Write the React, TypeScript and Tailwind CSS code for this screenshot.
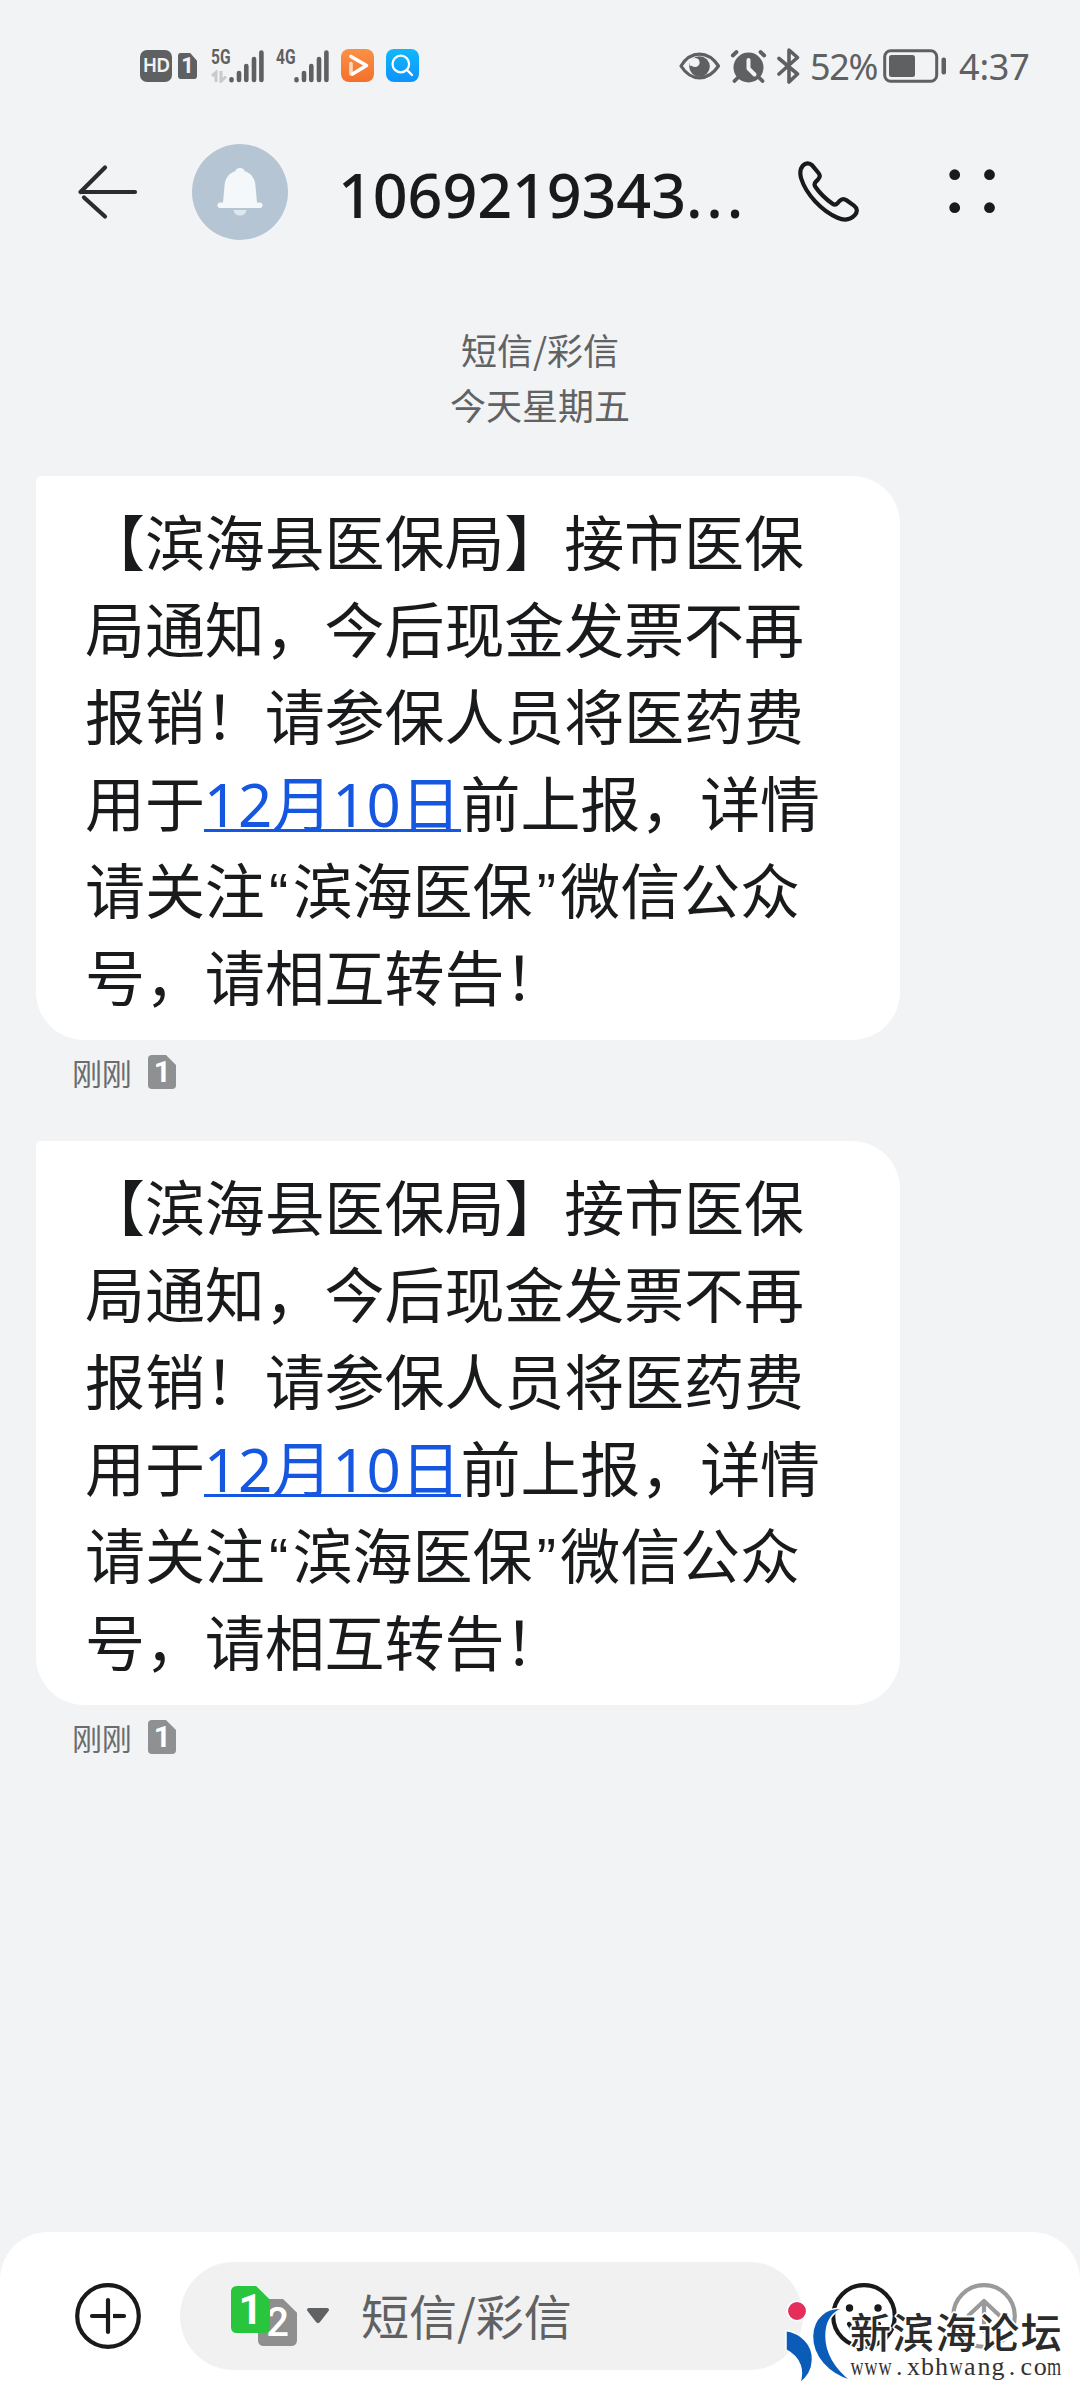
import React from "react";

const CJK = "font-['Noto_Sans_CJK_SC',sans-serif]";
const LATIN = "font-['Noto_Sans','Noto_Sans_CJK_SC',sans-serif]";

function SignalBars() {
  return (
    <svg width="35" height="34" viewBox="0 0 35 34" fill="none" stroke="#5f6061" strokeWidth="4.6" strokeLinecap="round">
      <path d="M2.5 30.2v1M10 24v7M17.3 17v14M25 10v21M32.4 3.5v27.5" />
    </svg>
  );
}

function SimCard({ n, className, textClass }: { n: string; className: string; textClass: string }) {
  return (
    <span className={`relative flex items-center justify-center ${className}`}>
      <svg className="absolute inset-0 h-full w-full" viewBox="0 0 28 34" preserveAspectRatio="none" fill="currentColor">
        <path d="M4 0H18L28 10V30a4 4 0 0 1-4 4H4a4 4 0 0 1-4-4V4a4 4 0 0 1 4-4Z" />
      </svg>
      <span className={`relative font-['Roboto',sans-serif] leading-none ${textClass}`}>{n}</span>
    </span>
  );
}

function StatusBar() {
  return (
    <div className="flex h-[131px] items-center pl-[140px] pr-[51px] text-[#5f6061]">
      <span className={`flex h-8 w-8 shrink-0 items-center justify-center rounded-[7px] bg-[#5f6061] text-[19px] font-semibold leading-none tracking-[-1px] text-[#f1f3f5] ${LATIN}`}>HD</span>
      <SimCard n="1" className="ml-[6px] h-[26px] w-[19px] text-[#5f6061]" textClass="text-[22px] font-bold text-[#f1f3f5]" />
      <div className="ml-[14px] flex h-[34px] items-end">
        <div className="flex h-full w-[18px] flex-col justify-between">
          <span className="block h-[18px] w-[18px] origin-left scale-x-[.74] font-['Roboto',sans-serif] text-[21px] font-bold leading-[17px]">5G</span>
          <svg width="17" height="13" viewBox="0 0 17 13" fill="none" stroke="#c9cacb" strokeWidth="3">
            <path d="M1 6 5 2.5V12M10 1v10l5-4.5" />
          </svg>
        </div>
        <SignalBars />
      </div>
      <div className="ml-[12px] flex h-[34px] items-end">
        <div className="flex h-full w-[18px] flex-col">
          <span className="block h-[18px] w-[18px] origin-left scale-x-[.74] font-['Roboto',sans-serif] text-[21px] font-bold leading-[17px]">4G</span>
        </div>
        <SignalBars />
      </div>
      <svg className="ml-[12px]" width="33" height="33" viewBox="0 0 33 33">
        <defs>
          <linearGradient id="orange" x1="0" y1="0" x2="0" y2="1">
            <stop offset="0" stopColor="#fb9146" />
            <stop offset="1" stopColor="#f4702a" />
          </linearGradient>
        </defs>
        <rect width="33" height="33" rx="8" fill="url(#orange)" />
        <path d="M10 14.500v10.500" stroke="#fff" strokeOpacity=".7" strokeWidth="3.600" strokeLinecap="round" />
        <path d="M10 7.500 25.500 16.500 11.500 25" fill="none" stroke="#fff" strokeWidth="3.600" strokeLinecap="round" strokeLinejoin="round" />
      </svg>
      <svg className="ml-[12px]" width="33" height="33" viewBox="0 0 33 33">
        <defs>
          <linearGradient id="blue" x1="0" y1="0" x2="0" y2="1">
            <stop offset="0" stopColor="#12b7fb" />
            <stop offset="1" stopColor="#0e93fb" />
          </linearGradient>
        </defs>
        <rect width="33" height="33" rx="8" fill="url(#blue)" />
        <circle cx="14.800" cy="15" r="8.300" fill="none" stroke="#fff" strokeWidth="2.200" />
        <path d="m21 21 5 5" stroke="#fff" strokeWidth="2.400" strokeLinecap="round" />
      </svg>

      <div className="ml-auto flex items-center">
        <svg width="42" height="30" viewBox="0 0 42 30">
          <path d="M2 15C7 7 13.500 3.200 20.500 3.200S34 7 39.500 15C34 23 27.500 26.800 20.500 26.800S7 23 2 15Z" fill="none" stroke="#5f6061" strokeWidth="3.200" strokeLinejoin="round" />
          <circle cx="20.500" cy="15.500" r="10.300" fill="#5f6061" />
          <circle cx="16" cy="11.500" r="4.600" fill="#f1f3f5" />
          <path d="M12.500 8a8 8 0 0 0-1.500 7l4-1Z" fill="#f1f3f5" />
        </svg>
        <svg className="ml-[9px]" width="37" height="34" viewBox="0 0 37 34" fill="none" strokeLinecap="round">
          <circle cx="18.500" cy="18.500" r="15" fill="#5f6061" />
          <path d="M2.800 6.500 6.500 3M34.200 6.500 30.500 3M7.500 29l-3 3M29.500 29l3 3" stroke="#5f6061" strokeWidth="3.800" />
          <path d="M18.500 11v8.500l6 6" stroke="#f1f3f5" strokeWidth="4" strokeLinejoin="round" />
        </svg>
        <svg className="ml-[10px]" width="24" height="36" viewBox="0 0 24 36" fill="none" stroke="#5f6061" strokeWidth="3.600" strokeLinecap="round" strokeLinejoin="round">
          <path d="M2 10.500 20.500 26l-8.500 8V2l8.500 7.500L2 26" />
        </svg>
        <span className={`relative top-px ml-[9px] w-[70px] whitespace-nowrap text-[36px] leading-[40px] tracking-[-1.300px] ${LATIN}`}>52%</span>
        <svg className="ml-[3px]" width="64" height="34" viewBox="0 0 64 34">
          <rect x="1.700" y="1.700" width="52" height="30.600" rx="6" fill="none" stroke="#5f6061" strokeWidth="3" />
          <rect x="6" y="6" width="26" height="22" rx="2.500" fill="#5f6061" />
          <rect x="58.500" y="8.500" width="4.500" height="17" rx="2" fill="#5f6061" />
        </svg>
        <span className={`relative top-px ml-[12px] w-[70px] whitespace-nowrap text-[36px] leading-[40px] tracking-[-0.200px] ${LATIN}`}>4:37</span>
      </div>
    </div>
  );
}

function Header() {
  return (
    <header className="mt-px flex h-[120px] items-center pl-[77px] text-[#191a1b]">
      <svg width="62" height="58" viewBox="0 0 62 58" fill="none" stroke="#2c2c2e" strokeWidth="4.200" strokeLinecap="round">
        <path d="M3.500 29H58M28 4.500 3.500 29" />
        <path d="M7 34.500 28 53.500" />
      </svg>
      <div className="ml-[53px] flex h-24 w-24 items-center justify-center rounded-full bg-[#b6c5d3]">
        <svg width="46" height="50" viewBox="0 0 46 50">
          <path d="M23 1c2.500 0 4 1.200 4.800 3.200C35 6.500 38 12 38.500 19L40 36H6l1.500-17C8 12 11 6.500 18.200 4.200 19 2.200 20.500 1 23 1Z" fill="#f5f8fa" />
          <rect x="0.500" y="35.500" width="45" height="5.500" rx="2.700" fill="#f5f8fa" />
          <path d="M16.500 43h13c-.7 3.800-3.200 5.600-6.500 5.600S17.200 46.800 16.500 43Z" fill="#dfe7ee" />
        </svg>
      </div>
      <h1 className={`ml-[50px] mt-[6px] w-[410px] whitespace-nowrap text-[61px] font-medium leading-[84px] ${LATIN}`}>
        <span className="tracking-[-0.100px]">1069219343</span>
        <span className="tracking-[3.800px]">...</span>
      </h1>
      <svg className="ml-[50px]" width="62" height="62" viewBox="0 0 62 62" fill="none" stroke="#191a1b" strokeWidth="4.200" strokeLinejoin="round">
        <path d="M5 4.500C7.500 1.800 11.500 1.500 14 4.200L20.500 12C22.500 14.500 22 16.500 20 18.500L17.800 20.800C16 22.700 16 24 17.500 26 22 32.500 28.500 38.500 34.500 42.800 36.500 44.200 38 44 39.600 42.200L41.500 40C43.500 37.900 46 37.500 48.500 39.200L56 44.600C59.500 47.200 59.700 51 56.800 54.200 52.500 58.800 46 59.500 39.500 56.700 23.500 49.800 8 33 3.200 17.500 1.900 13 1.800 8 5 4.500Z" />
      </svg>
      <svg className="ml-[88px]" width="48" height="46" viewBox="0 0 48 46" fill="#191a1b">
        <circle cx="6.700" cy="5.700" r="5.400" />
        <circle cx="41.500" cy="5.700" r="5.400" />
        <circle cx="6.700" cy="38.700" r="5.400" />
        <circle cx="41.500" cy="38.700" r="5.400" />
      </svg>
    </header>
  );
}

function Quote({ children }: { children: React.ReactNode }) {
  return <span className="inline-block w-[28px] text-center font-['Liberation_Sans',sans-serif] text-[58px] leading-none tracking-normal">{children}</span>;
}

function Message({ className }: { className: string }) {
  return (
    <article className={className}>
      <div className={`h-[564px] w-[864px] rounded-[48px] rounded-tl-[5px] bg-white pl-[49px] pt-[20px] text-[60px] leading-[87px] tracking-[-0.100px] whitespace-nowrap text-[#191a1b] ${CJK}`}>
        <p>【滨海县医保局】接市医保</p>
        <p>局通知，今后现金发票不再</p>
        <p>报销！请参保人员将医药费</p>
        <p>
          用于
          <a className="-ml-px inline-block h-[75px] border-b-[3px] border-[#1557e0] align-top leading-[87px] text-[#1557e0]">
            <span className={LATIN}>12</span>月<span className={LATIN}>10</span>日
          </a>
          前上报，详情
        </p>
        <p>
          请关注<Quote>“</Quote>滨海医保<Quote>”</Quote>微信公众
        </p>
        <p>号，请相互转告！</p>
      </div>
      <div className="flex h-[64px] items-center pl-[36px]">
        <span className={`text-[30px] leading-[40px] tracking-[-0.300px] text-[#6b6c6d] ${CJK}`}>刚刚</span>
        <SimCard n="1" className="ml-[17px] h-[34px] w-[28px] text-[#8f9092]" textClass="text-[30px] font-bold text-white" />
      </div>
    </article>
  );
}

const HALO = "[text-shadow:0_0_2px_#fff,1px_1px_0_#fff,-1px_-1px_0_#fff,1px_-1px_0_#fff,-1px_1px_0_#fff,2px_0_0_#fff,-2px_0_0_#fff,0_2px_0_#fff,0_-2px_0_#fff]";

function Watermark() {
  return (
    <div className="absolute bottom-[14px] left-[784px] flex h-[88px] w-[290px]">
      <svg className="shrink-0" width="66" height="88" viewBox="0 0 66 88" overflow="visible">
        <circle cx="13" cy="13" r="9.700" fill="#e52f5a" stroke="#fff" strokeWidth="1.500" />
        <path d="M2 32.500C17 35 29 46 28.500 62 28.200 72 23 80 15.500 85.500 20 73 17 60 2 52Z" fill="#0a5cb8" stroke="#fff" strokeWidth="1.500" />
        <path d="M59 10.500C42 9 29 20 28.500 38 28 58 44 76 67.500 83 50 69 42 54 42 38 42 24 47 15 59 10.500Z" fill="#0a5cb8" stroke="#fff" strokeWidth="1.500" />
      </svg>
      <div className="flex flex-col pt-[8px]">
        <span className={`whitespace-nowrap text-[41px] font-medium leading-[48px] tracking-[1.700px] text-[#2b2b2b] ${CJK} ${HALO}`}>新滨海论坛</span>
        <span className={`flex whitespace-nowrap font-['Liberation_Serif',serif] text-[26px] leading-[26px] text-[#333] ${HALO}`}>
          {"www.xbhwang.com".split("").map((c, i) => (
            <span key={i} className={c === "w" || c === "m" ? "flex w-[14.100px] scale-x-[.7] justify-center" : "flex w-[14.100px] justify-center"}>{c}</span>
          ))}
        </span>
      </div>
    </div>
  );
}

function Composer() {
  return (
    <footer className="relative mt-auto flex h-[168px] items-start rounded-t-[48px] bg-white pl-[75px] pt-[30px]">
      <div className="flex h-[108px] items-center">
        <svg width="66" height="66" viewBox="0 0 66 66" fill="none" stroke="#191a1b" strokeWidth="4.200" strokeLinecap="round">
          <circle cx="33" cy="33" r="30.800" />
          <path d="M33 17v32M17 33h14M40 33h9" />
          <path d="M38 33h8" strokeLinecap="butt" />
        </svg>
        <div className="ml-[39px] flex h-[108px] w-[623px] items-center rounded-full bg-[#f1f1f1] pl-[51px]">
          <div className="relative h-[60px] w-[67px]">
            <SimCard n="2" className="absolute! left-[27px] top-[13px] h-[47px] w-[39px] text-[#8f8f8f]" textClass="text-[40px] font-medium text-white" />
            <SimCard n="1" className="absolute! left-0 top-0 h-[47px] w-[39px] text-[#29c53d]" textClass="text-[42px] font-bold text-white" />
          </div>
          <svg className="ml-[9px]" width="22" height="16" viewBox="0 0 22 16" fill="#606162">
            <path d="M2 0h18c1.800 0 2.500 1.500 1.500 3L13 14c-1.200 1.500-2.800 1.500-4 0L.5 3C-.5 1.500.2 0 2 0Z" />
          </svg>
          <span className={`mb-[4px] ml-[32px] text-[48px] leading-[70px] text-[#606162] ${CJK}`}>短信/彩信</span>
        </div>
        <svg className="ml-[28px]" width="66" height="66" viewBox="0 0 66 66" fill="none" stroke="#191a1b" strokeWidth="4.200" strokeLinecap="round">
          <circle cx="33" cy="33" r="30.800" />
          <path d="M18 41c3 6 8.500 9 15 9s12-3 15-9" />
          <circle cx="18.500" cy="25" r="3.700" fill="#191a1b" stroke="none" />
          <circle cx="47" cy="25" r="3.700" fill="#191a1b" stroke="none" />
        </svg>
        <svg className="ml-[54px]" width="66" height="66" viewBox="0 0 66 66" fill="none" stroke="#9a9a9a" strokeWidth="4.200" strokeLinecap="round" strokeLinejoin="round">
          <circle cx="33" cy="33" r="30.800" />
          <path d="M17.500 32.500 33 18l15.500 14.500M33 20v28" />
        </svg>
      </div>
      <Watermark />
    </footer>
  );
}

export default function App() {
  return (
    <main className="flex h-[2400px] w-[1080px] flex-col overflow-hidden bg-[#f1f3f5]">
      <StatusBar />
      <Header />
      <div className={`mt-[70px] flex flex-col items-center text-[36px] leading-[55px] text-[#616263] ${CJK}`}>
        <span>短信/彩信</span>
        <span>今天星期五</span>
      </div>
      <section className="mt-[44px] pl-[36px]">
        <Message className="" />
        <Message className="mt-[37px]" />
      </section>
      <Composer />
    </main>
  );
}
